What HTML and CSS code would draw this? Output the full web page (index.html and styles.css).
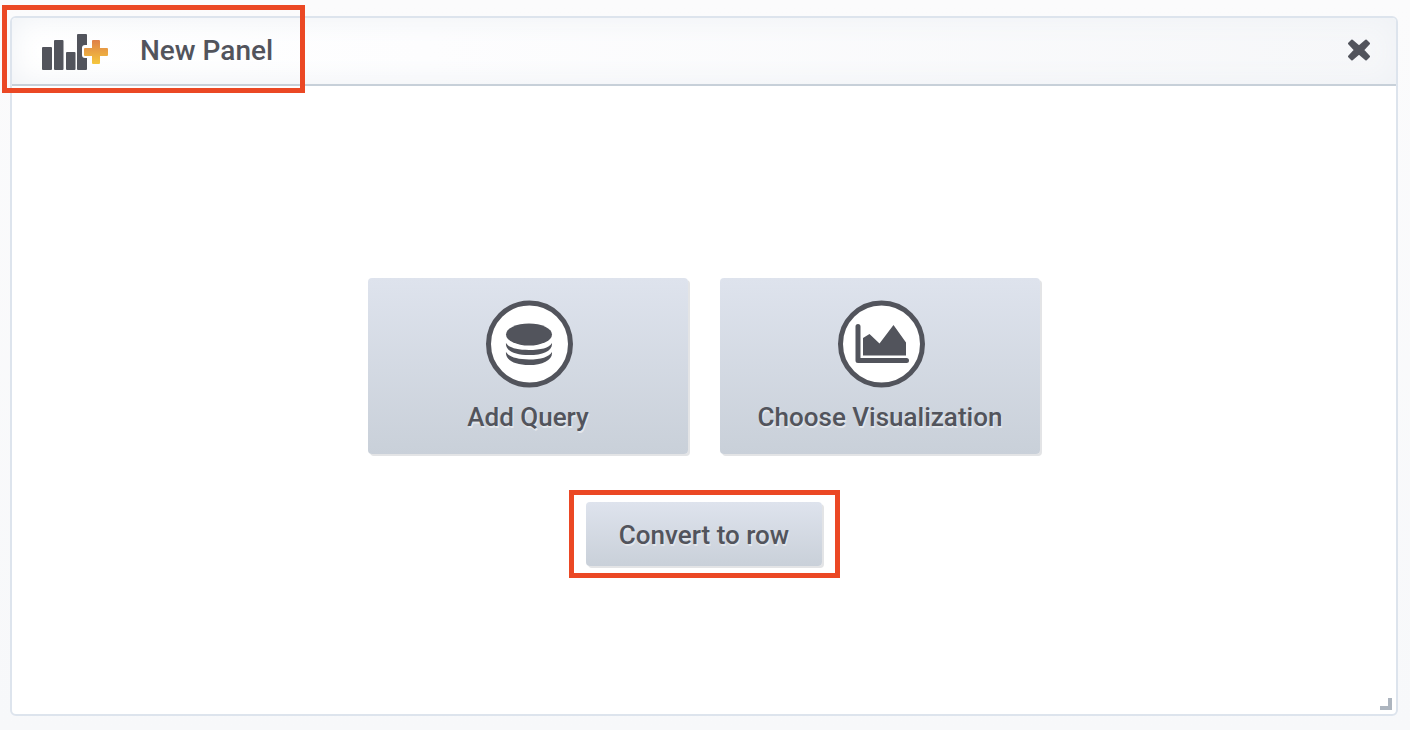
FILE: index.html
```html
<!DOCTYPE html>
<html lang="en">
<head>
<meta charset="utf-8">
<title>New Panel</title>
<link rel="stylesheet" href="styles.css">
</head>
<body>
<section class="panel">
  <header class="panel-header">
    <svg class="panel-icon" width="68" height="38" viewBox="0 0 68 38" aria-hidden="true">
      <defs>
        <linearGradient id="plus" x1="0" y1="0" x2="0" y2="1">
          <stop offset="0" stop-color="#df8049"/>
          <stop offset="1" stop-color="#f5c73d"/>
        </linearGradient>
      </defs>
      <g fill="#52545c">
        <rect x="0" y="13" width="10" height="23" rx="1"/>
        <rect x="12" y="6" width="9.500" height="30" rx="1"/>
        <rect x="24" y="18" width="9.500" height="18" rx="1"/>
        <path d="M36 0h8q1 0 1 1v10h-2q-3 0-3 3v7q0 3 3 3h2v11q0 1-1 1h-8q-1 0-1-1V1q0-1 1-1z"/>
      </g>
      <path fill="url(#plus)" d="M51 6h6q1 0 1 1v7h7q1 0 1 1v6q0 1-1 1h-7v7q0 1-1 1h-6q-1 0-1-1v-7h-7q-1 0-1-1v-6q0-1 1-1h7V7q0-1 1-1z"/>
    </svg>
    <h1 class="panel-title">New Panel</h1>
    <button class="close" type="button" aria-label="Close">
      <svg width="22" height="22" viewBox="0 0 22 22" aria-hidden="true">
        <path d="M4 1.500 11 7.500 18 1.500 21 4.500 15 11 21 17.500 18 20.500 11 14.500 4 20.500 1 17.500 7 11 1 4.500z" fill="#52545c" stroke="#52545c" stroke-width="2" stroke-linejoin="round"/>
      </svg>
    </button>
    <span class="header-highlight"></span>
  </header>
  <div class="panel-body">
    <div class="choices">
      <button class="button choice" type="button">
        <svg width="90" height="88" viewBox="0 0 90 88" aria-hidden="true">
          <circle cx="46.500" cy="44" r="41" fill="#fff" stroke="#52545c" stroke-width="5"/>
          <g fill="#52545c">
            <ellipse cx="46" cy="34.500" rx="23" ry="11"/>
            <path d="M23 43c3 5 11 7 23 7s20-2 23-7c.8 8-9 12-23 12s-24-4-23-12z"/>
            <path d="M23 52c3 5 11 7.500 23 7.500s20-2.500 23-7.500c.8 8-9 13-23 13s-24-5-23-13z"/>
          </g>
        </svg>
        <span>Add Query</span>
      </button>
      <button class="button choice" type="button">
        <svg width="90" height="88" viewBox="0 0 90 88" aria-hidden="true">
          <circle cx="46.500" cy="44" r="41" fill="#fff" stroke="#52545c" stroke-width="5"/>
          <path d="M23 26.500v34h48.500" fill="none" stroke="#52545c" stroke-width="5" stroke-linecap="round" stroke-linejoin="round"/>
          <path d="M28 38l6.500-4 10 9.500L58.500 25 71 42.500v13H28z" fill="#52545c"/>
        </svg>
        <span>Choose Visualization</span>
      </button>
    </div>
    <div class="convert-wrap">
      <button class="button convert" type="button">Convert to row</button>
      <span class="convert-highlight"></span>
    </div>
  </div>
  <span class="resize"></span>
</section>
</body>
</html>
```
FILE: styles.css
```css
* {
  box-sizing: border-box;
}

body {
  margin: 0;
  min-height: 100vh;
  padding: 16px 12px 14px 10px;
  display: flex;
  background: linear-gradient(#fbfbfc, #f7f8fa);
  color: #52545c;
  font-family: Roboto, sans-serif;
}

.panel {
  position: relative;
  flex: 1;
  display: flex;
  flex-direction: column;
  border: 2px solid #dde4ed;
  border-radius: 6px;
  background: #fff;
}

.panel-header {
  position: relative;
  display: flex;
  align-items: center;
  height: 68px;
  padding: 0 26px 0 30px;
  border-bottom: 2px solid #c7d0d9;
  border-radius: 4px 4px 0 0;
  background: linear-gradient(90deg, #fff, #fdfdfe 30%, #f6f7f9);
  box-shadow: inset 0 0 30px #eef1f5;
}

.panel-icon {
  margin-top: 4px;
}

.panel-title {
  margin: 0 0 0 30px;
  font-size: 28px;
  font-weight: 500;
  line-height: 32px;
}

.close {
  display: flex;
  margin-left: auto;
  margin-bottom: 2px;
  padding: 0;
  border: 0;
  background: none;
}

.header-highlight,
.convert-highlight {
  position: absolute;
  border: 5px solid #eb4824;
  pointer-events: none;
}

.header-highlight {
  top: -13px;
  left: -10px;
  width: 303px;
  height: 88px;
}

.panel-body {
  flex: 1;
  display: flex;
  flex-direction: column;
  align-items: center;
  gap: 48px;
  padding: 192px 0 48px;
}

.choices {
  display: flex;
  gap: 32px;
}

.button {
  border: 0;
  border-radius: 4px;
  background: linear-gradient(#dee3ed, #c9d0d9);
  box-shadow: 2px 2px 0 #e3e4e6;
  color: inherit;
  font: 500 26px/32px Roboto, sans-serif;
  text-shadow: 1px 2px 0 #e3e7ec;
}

.choice {
  display: flex;
  flex-direction: column;
  align-items: center;
  gap: 13px;
  width: 320px;
  padding: 22px 0 21px;
}

.convert-wrap {
  position: relative;
}

.convert {
  display: block;
  padding: 17px 33px 15px;
}

.convert-highlight {
  top: -12px;
  right: -18px;
  bottom: -12px;
  left: -17px;
}

.resize {
  position: absolute;
  right: 4px;
  bottom: 4px;
  width: 12px;
  height: 12px;
  border: solid #adb5bf;
  border-width: 0 4px 4px 0;
}
```
